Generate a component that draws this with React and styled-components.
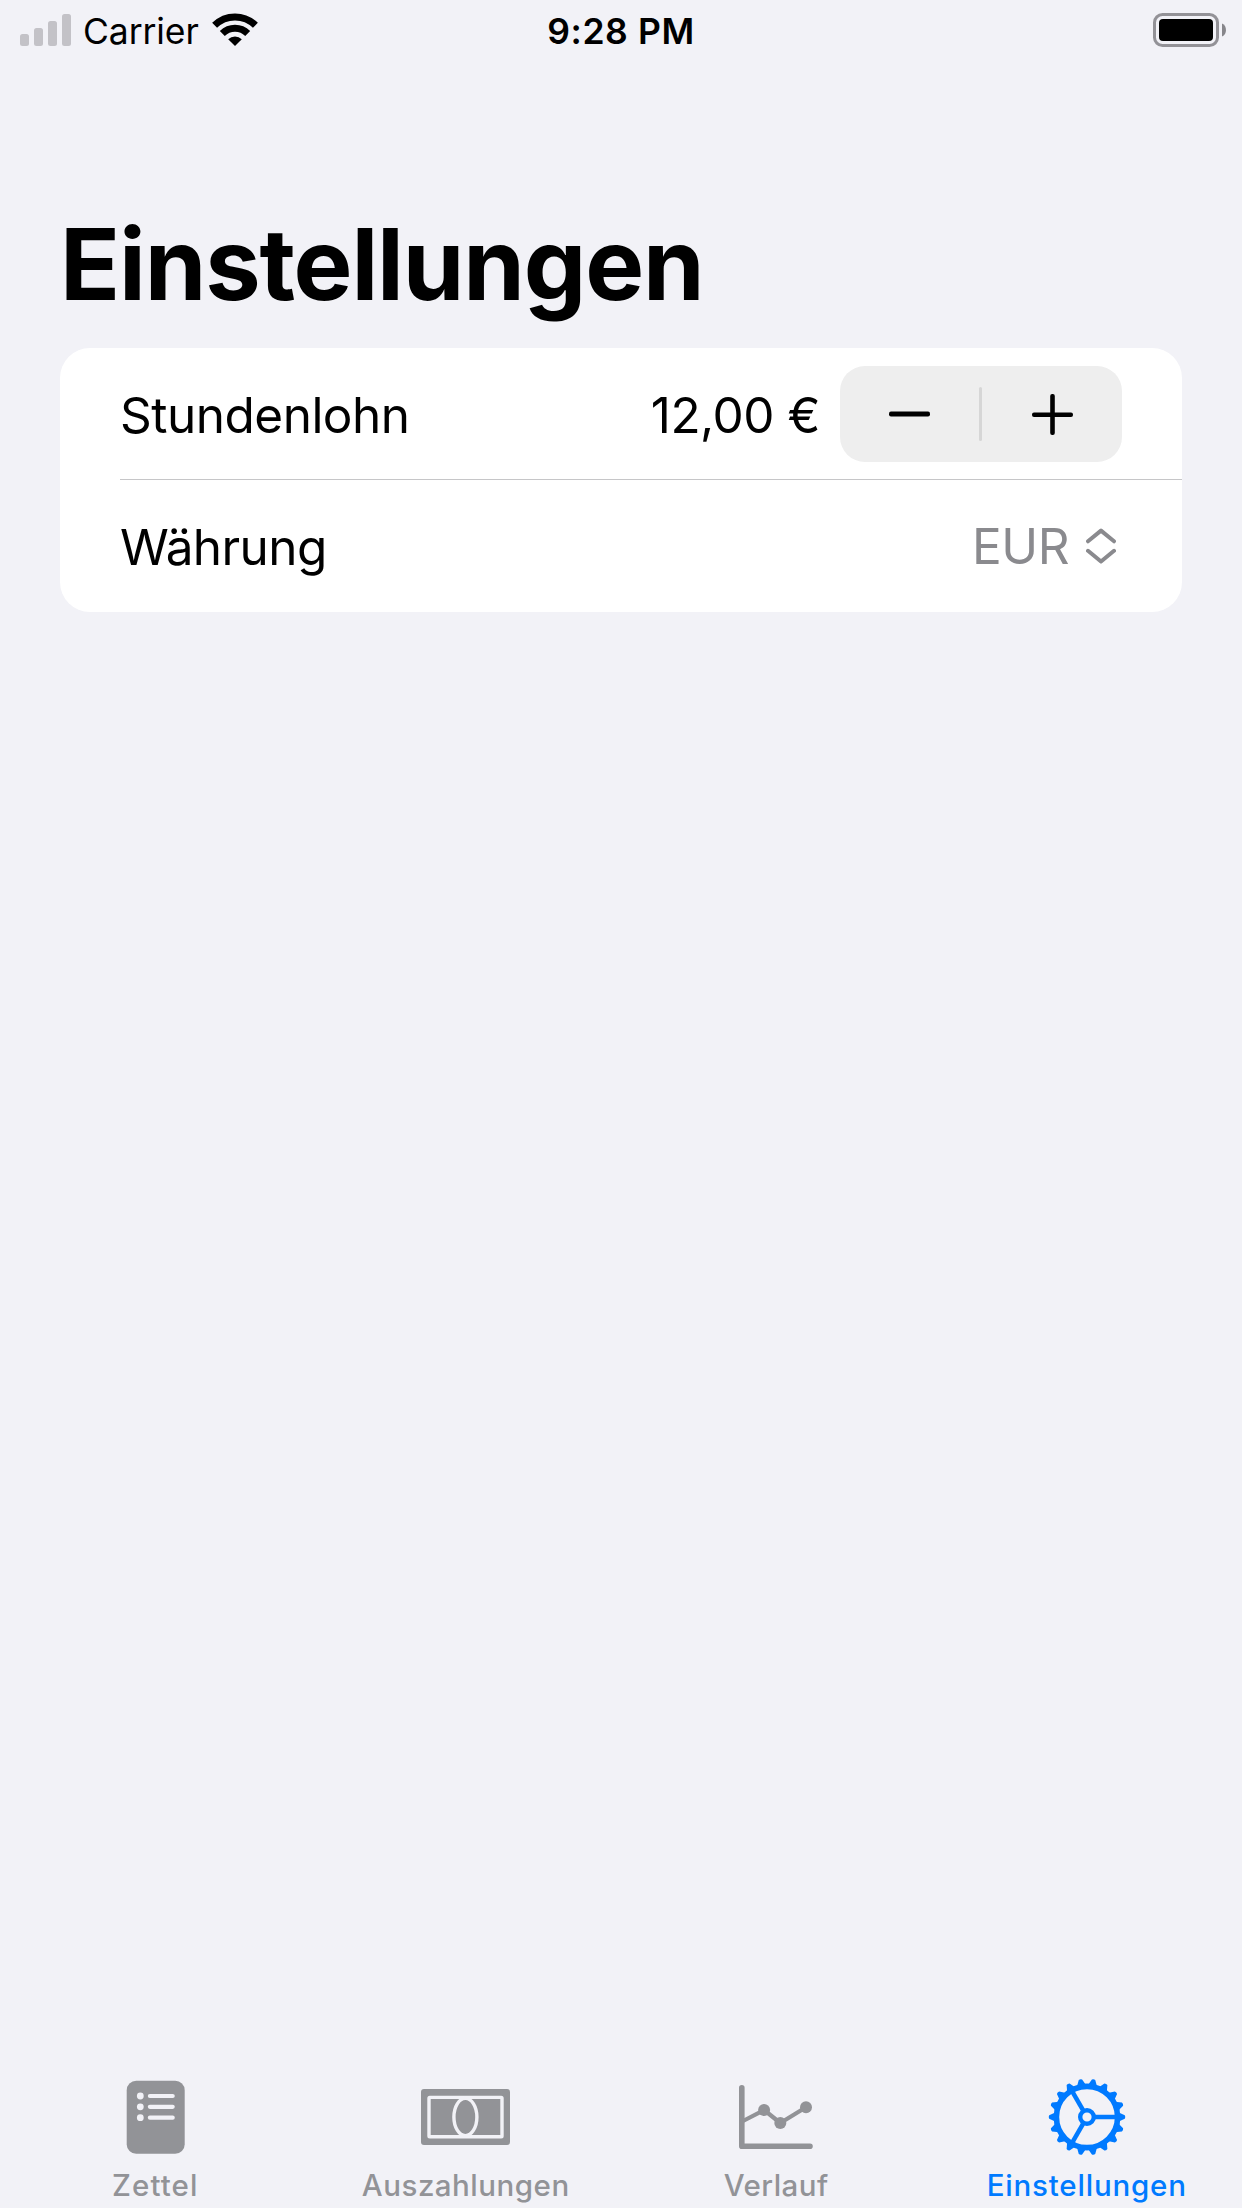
import React from "react";
import styled, { createGlobalStyle } from "styled-components";

const GlobalStyle = createGlobalStyle`
  * { box-sizing: border-box; }
  body {
    margin: 0;
    background: #f2f2f7;
    font-family: Inter, "Liberation Sans", sans-serif;
    color: #000;
  }
  button { font: inherit; border: 0; padding: 0; background: none; color: inherit; }
  svg { display: block; flex: none; }
`;

const Screen = styled.div`
  width: 1242px;
  height: 2208px;
  display: flex;
  flex-direction: column;
  background: #f2f2f7;
  overflow: hidden;
`;

const StatusBar = styled.header`
  height: 60px;
  display: grid;
  grid-template-columns: 1fr auto 1fr;
  align-items: start;
  padding: 0 15px 0 20px;
`;

const Network = styled.div`
  display: flex;
  align-items: flex-start;
  padding-top: 13px;
`;

const Carrier = styled.span`
  margin: 0 13px 0 12px;
  padding-top: 1px;
  font-size: 35.5px;
  line-height: 36px;
  letter-spacing: -0.1px;
`;

const Clock = styled.time`
  padding: 14px 5px 0 0;
  font-size: 35.5px;
  line-height: 36px;
  font-weight: 600;
  letter-spacing: 0.6px;
`;

const Power = styled.div`
  display: flex;
  justify-content: flex-end;
  padding-top: 13px;
`;

const Content = styled.main`
  flex: 1;
  padding: 144px 60px 0;
`;

const Title = styled.h1`
  margin: 0 0 24px;
  font-size: 99px;
  line-height: 120px;
  font-weight: 700;
  letter-spacing: -1.15px;
  white-space: nowrap;
`;

const Card = styled.section`
  border-radius: 30px;
  background: #fff;
  overflow: hidden;
`;

const Row = styled.div`
  height: ${(p) => p.$height}px;
  display: flex;
  align-items: center;
  padding: ${(p) => p.$shift || 0}px 60px 0;
`;

const Divider = styled.div`
  height: 1px;
  margin-left: 60px;
  background: #c6c6c8;
`;

const RowText = styled.span`
  font-size: 49.5px;
  line-height: 60px;
  padding-top: ${(p) => (p.$muted ? 0 : 2)}px;
  white-space: nowrap;
  letter-spacing: ${(p) => p.$tracking}px;
  color: ${(p) => (p.$muted ? "#8a8a8e" : "#000")};
  margin-left: ${(p) => (p.$end ? "auto" : "0")};
`;

const Stepper = styled.div`
  width: 282px;
  height: 96px;
  margin-left: 20px;
  display: flex;
  align-items: center;
  border-radius: 25px;
  background: #eeeeee;
`;

const StepButton = styled.button`
  flex: 1;
  height: 100%;
  display: flex;
  align-items: center;
  justify-content: center;
`;

const StepDivider = styled.span`
  width: 3px;
  height: 54px;
  margin: 0 1px 0 -1px;
  border-radius: 2px;
  background: #d6d6d6;
`;

const Picker = styled.div`
  margin-left: auto;
  display: flex;
  align-items: center;
  gap: 17px;
  padding-right: 6px;
`;

const TabBar = styled.nav`
  height: 147px;
  display: grid;
  grid-template-columns: repeat(4, 1fr);
`;

const Tab = styled.button`
  display: flex;
  flex-direction: column;
  align-items: center;
  color: ${(p) => (p.$active ? "#007aff" : "#929397")};
`;

const TabIcon = styled.span`
  height: 106px;
  display: flex;
  align-items: flex-start;
  padding-top: 17px;
`;

const TabLabel = styled.span`
  font-size: 29.5px;
  line-height: 36px;
  font-weight: 500;
  white-space: nowrap;
  letter-spacing: ${(p) => p.$tracking}px;
`;

const BG = "#f2f2f7";

const SignalIcon = () => (
  <svg width="51" height="33" viewBox="0 0 51 33" fill="#c3c2c7">
    <rect x="0" y="21" width="9" height="12" rx="2.5" />
    <rect x="14" y="15" width="9" height="18" rx="2.5" />
    <rect x="28" y="8" width="9" height="25" rx="2.5" />
    <rect x="42" y="1" width="9" height="32" rx="2.5" />
  </svg>
);

const WifiIcon = () => (
  <svg width="46" height="33" viewBox="0 0 46 33">
    <g fill="none" stroke="#000" strokeWidth="7">
      <path d="M2.6 12.3 A29 29 0 0 1 43.4 12.3" />
      <path d="M10.3 20.4 A18 18 0 0 1 35.7 20.4" />
    </g>
    <path d="M23 33 L16.2 26.2 A9.8 9.8 0 0 1 29.8 26.2 Z" />
  </svg>
);

const BatteryIcon = () => (
  <svg width="74" height="34" viewBox="0 0 74 34">
    <rect x="1.5" y="1.5" width="63" height="31" rx="8" fill="none" stroke="#939297" strokeWidth="3" />
    <rect x="6" y="6" width="54" height="22" rx="4" />
    <path d="M69 10.5 C74.3 12.5 74.3 21.5 69 23.5 Z" fill="#87868b" />
  </svg>
);

const MinusIcon = () => (
  <svg width="41" height="41" viewBox="0 0 41 41">
    <rect x="0" y="17.6" width="41" height="5" rx="2" />
  </svg>
);

const PlusIcon = () => (
  <svg width="41" height="41" viewBox="0 0 41 41">
    <rect x="0" y="18.4" width="41" height="4.6" rx="2" />
    <rect x="18.2" y="0" width="4.6" height="41" rx="2" />
  </svg>
);

const ChevronsIcon = () => (
  <svg width="30" height="36" viewBox="0 0 30 36" fill="none" stroke="#8a8a8e" strokeWidth="4" strokeLinecap="round" strokeLinejoin="round">
    <path d="M2 13.3 L15 2.6 L28 13.3" />
    <path d="M2 22.8 L15 33.5 L28 22.8" />
  </svg>
);

const NoteIcon = () => (
  <svg width="78" height="78" viewBox="0 0 78 78">
    <rect x="10.7" y="2.7" width="58" height="73" rx="9.5" fill="currentColor" />
    <g fill={BG}>
      {[18, 28.8, 39.7].map((y) => (
        <React.Fragment key={y}>
          <circle cx="24.3" cy={y} r="3.4" />
          <rect x="31.8" y={y - 2.1} width="27" height="4.2" rx="2.1" />
        </React.Fragment>
      ))}
    </g>
  </svg>
);

const BanknoteIcon = () => (
  <svg width="90" height="78" viewBox="0 0 90 78">
    <rect x="0" y="11" width="89" height="56" rx="3" fill="currentColor" />
    <g fill="none" stroke={BG} strokeWidth="3.4">
      <rect x="8" y="19.4" width="73" height="39.4" rx="0.8" />
      <ellipse cx="44.4" cy="39" rx="11.5" ry="18.6" fill="currentColor" />
    </g>
  </svg>
);

const ChartIcon = () => (
  <svg width="78" height="78" viewBox="0 0 78 78">
    <g fill="none" stroke="currentColor" strokeLinecap="round" strokeLinejoin="round">
      <path d="M4.8 9.8 V68.2 H73" strokeWidth="5.6" />
      <path d="M6 43 L27.1 32 L43.3 45 L69 29.3" strokeWidth="4.2" />
    </g>
    <g fill="currentColor">
      <circle cx="27.1" cy="32" r="6" />
      <circle cx="43.3" cy="45" r="6" />
      <circle cx="69" cy="29.3" r="6" />
    </g>
  </svg>
);

const teeth = Array.from({ length: 18 }, (_, i) => i * 20);
const GearIcon = () => (
  <svg width="78" height="78" viewBox="-39 -39 78 78">
    <g fill="none" stroke="currentColor">
      <circle r="30.6" strokeWidth="5.6" />
      <circle r="6.8" strokeWidth="4.4" />
      {[0, 120, 240].map((a) => (
        <path key={a} d="M8 0 H29" strokeWidth="4.5" transform={`rotate(${a})`} />
      ))}
    </g>
    {teeth.map((a) => (
      <path
        key={a}
        d="M31.5 -5 L33.4 -3.8 L37.8 -1.7 Q38.8 0 37.8 1.7 L33.4 3.8 L31.5 5 Z"
        fill="currentColor"
        transform={`rotate(${a})`}
      />
    ))}
  </svg>
);

const TABS = [
  { label: "Zettel", Icon: NoteIcon, tracking: 1.1 },
  { label: "Auszahlungen", Icon: BanknoteIcon, tracking: 0.5 },
  { label: "Verlauf", Icon: ChartIcon, tracking: 0.5 },
  { label: "Einstellungen", Icon: GearIcon, tracking: 0.8, active: true },
];

export default function App() {
  return (
    <>
      <GlobalStyle />
      <Screen>
        <StatusBar>
          <Network>
            <SignalIcon />
            <Carrier>Carrier</Carrier>
            <WifiIcon />
          </Network>
          <Clock>9:28 PM</Clock>
          <Power>
            <BatteryIcon />
          </Power>
        </StatusBar>
        <Content>
          <Title>Einstellungen</Title>
          <Card>
            <Row $height={131} $shift={1}>
              <RowText $tracking={-0.5}>Stundenlohn</RowText>
              <RowText $tracking={-0.5} $end>12,00 €</RowText>
              <Stepper>
                <StepButton aria-label="Weniger"><MinusIcon /></StepButton>
                <StepDivider />
                <StepButton aria-label="Mehr"><PlusIcon /></StepButton>
              </Stepper>
            </Row>
            <Divider />
            <Row $height={132}>
              <RowText $tracking={-0.6}>Währung</RowText>
              <Picker>
                <RowText $tracking={-0.5} $muted>EUR</RowText>
                <ChevronsIcon />
              </Picker>
            </Row>
          </Card>
        </Content>
        <TabBar>
          {TABS.map(({ label, Icon, tracking, active }) => (
            <Tab key={label} $active={active}>
              <TabIcon><Icon /></TabIcon>
              <TabLabel $tracking={tracking}>{label}</TabLabel>
            </Tab>
          ))}
        </TabBar>
      </Screen>
    </>
  );
}
